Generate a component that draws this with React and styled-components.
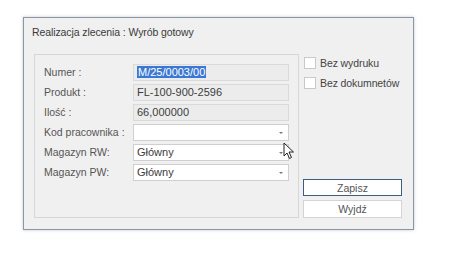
import React from 'react'
import styled, { createGlobalStyle } from 'styled-components'

const GlobalStyle = createGlobalStyle`
  html, body {
    margin: 0;
    background: #ffffff;
  }
  body {
    font-family: "Liberation Sans", Arial, sans-serif;
  }
`

const Page = styled.div`
  width: 461px;
  height: 261px;
  padding: 17px 0 0 23px;
  box-sizing: border-box;
  position: relative;
`

const Dialog = styled.div`
  width: 391px;
  height: 213px;
  box-sizing: border-box;
  background: #f0f0f0;
  border: 1px solid #8d95a3;
  box-shadow: 0 0 3px rgba(90, 100, 120, 0.35);
  padding: 8px 11px 11px 10px;
  display: flex;
  flex-direction: column;
`

const Title = styled.div`
  font-size: 10.5px;
  letter-spacing: -0.1px;
  color: #3a3a3a;
  height: 28px;
  line-height: 13px;
  margin-left: -2px;
`

const Body = styled.div`
  display: flex;
  gap: 4px;
  flex: 1;
`

const Panel = styled.div`
  width: 265px;
  box-sizing: border-box;
  border: 1px solid #d6d6d6;
  padding: 9px 9px 0 9px;
  display: grid;
  grid-template-columns: 89px 156px;
  grid-auto-rows: 17px;
  row-gap: 3px;
  align-content: start;
`

const Label = styled.div`
  font-size: 10.5px;
  color: #555;
  line-height: 17px;
  white-space: nowrap;
`

const Field = styled.div`
  position: relative;
  box-sizing: border-box;
  height: 17px;
  border: 1px solid ${p => (p.$readOnly ? '#dadada' : '#cfcfcf')};
  background: ${p => (p.$readOnly ? '#ececec' : '#ffffff')};
  font-size: 11px;
  color: #3c3c3c;
  line-height: 15px;
  padding-left: 3px;
`

const Selected = styled.span`
  background: #3b78d4;
  color: #ffffff;
  padding: 0 1px;
`

const Arrow = styled.span`
  position: absolute;
  right: 5px;
  top: 7px;
  width: 0;
  height: 0;
  border-left: 2px solid transparent;
  border-right: 2px solid transparent;
  border-top: 2px solid #777;
`

const Side = styled.div`
  width: 99px;
  display: flex;
  flex-direction: column;
`

const Check = styled.label`
  display: flex;
  align-items: center;
  gap: 4px;
  height: 20px;
  font-size: 10.5px;
  letter-spacing: -0.1px;
  color: #444;
  margin-left: 1px;
  white-space: nowrap;
`

const Box = styled.span`
  width: 10px;
  height: 10px;
  border: 1px solid #c9c9c9;
  background: #ffffff;
  flex: none;
`

const Checks = styled.div`
  margin-top: -1px;
  flex: 1;
`

const Buttons = styled.div`
  display: flex;
  flex-direction: column;
  gap: 4px;
`

const Button = styled.button`
  height: ${p => (p.$default ? '17px' : '18px')};
  box-sizing: border-box;
  padding: 0;
  margin: 0;
  background: #ffffff;
  border: ${p => (p.$default ? '1.5px solid #3f5d80' : '1px solid #d4d4d4')};
  font-family: "Liberation Sans", Arial, sans-serif;
  font-size: 10.5px;
  color: #555;
`

const Cursor = styled.svg`
  position: absolute;
  left: 283px;
  top: 142px;
`

const rows = [
  { label: 'Numer :', value: <Selected>M/25/0003/00</Selected>, readOnly: true },
  { label: 'Produkt :', value: 'FL-100-900-2596', readOnly: true },
  { label: 'Ilość :', value: '66,000000', readOnly: true },
  { label: 'Kod pracownika :', value: '', combo: true },
  { label: 'Magazyn RW:', value: 'Główny', combo: true },
  { label: 'Magazyn PW:', value: 'Główny', combo: true },
]

export default function App() {
  return (
    <Page>
      <GlobalStyle />
      <Dialog>
        <Title>Realizacja zlecenia : Wyrób gotowy</Title>
        <Body>
          <Panel>
            {rows.map(r => (
              <React.Fragment key={r.label}>
                <Label>{r.label}</Label>
                <Field $readOnly={r.readOnly}>
                  {r.value}
                  {r.combo && <Arrow />}
                </Field>
              </React.Fragment>
            ))}
          </Panel>
          <Side>
            <Checks>
              <Check><Box />Bez wydruku</Check>
              <Check><Box />Bez dokumnetów</Check>
            </Checks>
            <Buttons>
              <Button $default>Zapisz</Button>
              <Button>Wyjdź</Button>
            </Buttons>
          </Side>
        </Body>
      </Dialog>
      <Cursor width="12" height="18" viewBox="0 0 12 18">
        <path d="M1 1 L1 14 L4 11 L6.5 16.5 L8.5 15.5 L6 10 L10.5 10 Z" fill="#ffffff" stroke="#222" strokeWidth="1" strokeLinejoin="round" />
      </Cursor>
    </Page>
  )
}
